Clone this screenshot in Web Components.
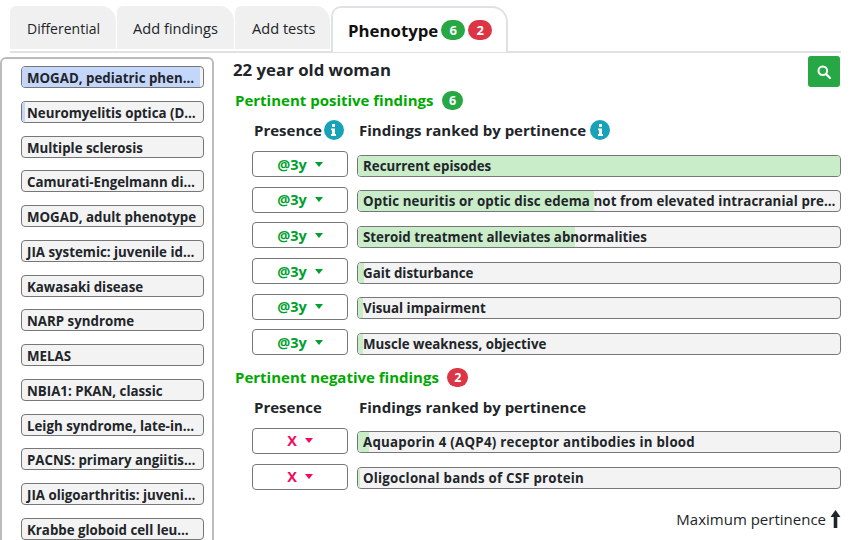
<!DOCTYPE html>
<html><head><meta charset="utf-8"><style>
html,body{margin:0;padding:0;background:#fff;width:850px;height:540px;overflow:hidden}
body{font-family:"Open Sans","Noto Sans",sans-serif;color:#212529}
</style></head><body>
<app-shell></app-shell>
<script>
function def(name, css, html){
  customElements.define(name, class extends HTMLElement{
    connectedCallback(){
      if(this.shadowRoot) return;
      const r=this.attachShadow({mode:'open'});
      const h = typeof html==='function'?html(this):html;
      r.innerHTML='<style>'+css+'</style>'+h;
    }
  });
}
const F='"Open Sans","Noto Sans",sans-serif';
def('count-badge',`:host{display:inline-flex;align-items:center;justify-content:center;width:21px;height:19px;border-radius:10px;color:#fff;font:700 12.500px ${F};background:#28a745}:host([c=red]){background:#dc3545}:host([big]){width:24px;height:20px;font-size:13px}`,'<slot></slot>');
def('info-dot',`:host{display:inline-flex;align-items:center;justify-content:center;width:20px;height:20px;border-radius:50%;background:#17a2b8;color:#fff}`,'<svg width="5" height="12" viewBox="0 0 5 12"><rect x="1" y="0" width="3" height="3" fill="#fff"/><path d="M0 4.500h4v5.500h1v2H0v-2h1V6.300H0z" fill="#fff"/></svg>');
def('tab-item',`:host{display:flex;align-items:center;box-sizing:border-box;height:43px;padding:1px 0 0 17px;background:#f0f0f0;border-radius:6px 15px 0 0;font:400 14.600px ${F};color:#212529;margin-bottom:2px;white-space:nowrap}
:host([active]){background:#fff;height:46px;margin-bottom:-1px;border:2px solid #dee2e6;border-bottom:0;border-radius:10px 16px 0 0;font-weight:700;font-size:16.800px;color:#111;gap:3px;padding:0 0 0 15px}`,'<slot></slot>');
def('tab-bar',`:host{display:flex;align-items:flex-end;gap:1px;box-sizing:border-box;margin:7px 0 0 10px;height:46px;border-bottom:2px solid #dee2e6;width:831px}`,'<slot></slot>');
def('dx-item',`:host{display:block;box-sizing:border-box;height:22px;width:183px;border:1px solid #777;border-radius:4px;background:#f3f3f3;position:relative;overflow:hidden;flex:none}
.f{position:absolute;left:0;top:0;bottom:0;background:#c4d7fb}
.t{position:relative;display:block;padding:1px 2px 0 5px;font:700 13.300px/20px ${F};white-space:nowrap;overflow:hidden;text-overflow:ellipsis;color:#212529}`,
 h=>`<div class="f" style="width:${h.getAttribute('p')||0}%"></div><span class="t" style="padding-right:${h.getAttribute('pr')||2}px"><slot></slot></span>`);
def('dx-list',`:host{display:flex;flex-direction:column;gap:12.750px;box-sizing:border-box;width:214px;height:490px;border:2px solid #bbb;border-bottom:0;border-radius:6px 6px 0 0;padding:7px 0 0 19px;overflow:hidden;flex:none}`,'<slot></slot>');
def('presence-select',`:host{display:flex;align-items:center;justify-content:center;gap:8px;box-sizing:border-box;width:96px;height:26px;border:1px solid #777;border-radius:4px;background:#fff;font:700 14.500px ${F};color:#00a030;flex:none}
:host([neg]){color:#f5085f}
i{display:block;width:0;height:0;border:4px solid transparent;border-top:5px solid currentColor;border-bottom:0}`,'<span><slot></slot></span><i></i>');
def('finding-bar',`:host{display:block;box-sizing:border-box;flex:1;min-width:0;height:22px;margin-top:3px;border:1px solid #777;border-radius:4px;background:#f3f3f3;position:relative;overflow:hidden}
.f{position:absolute;left:0;top:0;bottom:0;background:#c9ecc9}
.t{position:relative;display:block;padding:0 3px 0 5px;font:700 13.300px/20px ${F};white-space:nowrap;overflow:hidden;text-overflow:ellipsis;color:#212529}`,
 h=>`<div class="f" style="width:${h.getAttribute('p')||0}%"></div><span class="t" style="letter-spacing:${h.getAttribute('ls')||0}px"><slot></slot></span>`);
def('finding-row',`:host{display:flex;align-items:center;gap:9px;height:26px;margin-left:19px}`,'<slot></slot>');
def('col-heads',`:host{display:flex;align-items:center;height:24px;margin-left:21px;font:700 15px ${F};color:#212529;white-space:nowrap}
.a{display:flex;align-items:center;gap:2px;width:105px}.b{display:flex;align-items:center;gap:4px}`,
 h=>`<div class="a"><span>Presence</span>${h.hasAttribute('info')?'<info-dot></info-dot>':''}</div><div class="b"><span>Findings ranked by pertinence</span>${h.hasAttribute('info')?'<info-dot></info-dot>':''}</div>`);
def('section-title',`:host{display:flex;align-items:center;gap:8.500px;margin-left:2px;font:700 15px ${F};color:#00a800;height:20px;white-space:nowrap}`,'<slot></slot>');
def('search-btn',`:host{display:flex;align-items:center;justify-content:center;width:32px;height:31px;background:#28a745;border-radius:3px;flex:none;margin-right:1px}`,'<svg width="14" height="14" viewBox="0 0 14 14" fill="none" stroke="#fff"><circle cx="5.800" cy="5.800" r="4.300" stroke-width="2"/><path d="M9 9l4 4" stroke-width="2.200" stroke-linecap="round"/></svg>');
def('app-shell',`:host{display:block;width:850px;height:540px;overflow:hidden}
.body{display:flex;margin-top:4px}
.main{flex:none;width:608px;margin-left:19px}
.top{display:flex;justify-content:space-between;align-items:flex-start;height:31px;margin-top:-1px}
h1{margin:2px 0 0;font:700 16.800px ${F};color:#212529}
.rows{display:flex;flex-direction:column;gap:9.700px}
.foot{display:flex;justify-content:flex-end;align-items:center;gap:4px;margin-top:19px;font:400 15px ${F};color:#212529}
.foot svg{flex:none}`,`
<tab-bar>
 <tab-item style="width:106px;font-size:14px">Differential</tab-item><tab-item style="width:117px;padding-left:16px">Add findings</tab-item><tab-item style="width:95px;padding-left:17px">Add tests</tab-item>
 <tab-item active style="width:177px">Phenotype <count-badge big>6</count-badge><count-badge big c="red">2</count-badge></tab-item>
</tab-bar>
<div class="body">
<dx-list>
 <dx-item p="98.500">MOGAD, pediatric phenotype</dx-item>
 <dx-item p="1.600">Neuromyelitis optica (DEVIC)</dx-item>
 <dx-item>Multiple sclerosis</dx-item>
 <dx-item>Camurati-Engelmann disease</dx-item>
 <dx-item>MOGAD, adult phenotype</dx-item>
 <dx-item pr="8">JIA systemic: juvenile idiopathic</dx-item>
 <dx-item>Kawasaki disease</dx-item>
 <dx-item>NARP syndrome</dx-item>
 <dx-item>MELAS</dx-item>
 <dx-item>NBIA1: PKAN, classic</dx-item>
 <dx-item pr="8">Leigh syndrome, late-infantile</dx-item>
 <dx-item pr="6">PACNS: primary angiitis of CNS</dx-item>
 <dx-item pr="4">JIA oligoarthritis: juvenile idiopathic</dx-item>
 <dx-item pr="8">Krabbe globoid cell leukodystrophy</dx-item>
</dx-list>
<div class="main">
 <div class="top"><h1>22 year old woman</h1><search-btn></search-btn></div>
 <section-title style="margin-top:3px">Pertinent positive findings <count-badge>6</count-badge></section-title>
 <col-heads info style="margin-top:8px;margin-bottom:9px"></col-heads>
 <div class="rows">
  <finding-row><presence-select>@3y</presence-select><finding-bar p="100">Recurrent episodes</finding-bar></finding-row>
  <finding-row><presence-select>@3y</presence-select><finding-bar p="49" ls="0.100">Optic neuritis or optic disc edema not from elevated intracranial pressure</finding-bar></finding-row>
  <finding-row><presence-select>@3y</presence-select><finding-bar p="45">Steroid treatment alleviates abnormalities</finding-bar></finding-row>
  <finding-row><presence-select>@3y</presence-select><finding-bar p="1.200">Gait disturbance</finding-bar></finding-row>
  <finding-row><presence-select>@3y</presence-select><finding-bar p="1">Visual impairment</finding-bar></finding-row>
  <finding-row><presence-select>@3y</presence-select><finding-bar p="1">Muscle weakness, objective</finding-bar></finding-row>
 </div>
 <section-title style="margin-top:12px">Pertinent negative findings <count-badge c="red">2</count-badge></section-title>
 <col-heads style="margin-top:8px;margin-bottom:8.500px"></col-heads>
 <div class="rows">
  <finding-row><presence-select neg>X</presence-select><finding-bar p="2.300" ls="0.250">Aquaporin 4 (AQP4) receptor antibodies in blood</finding-bar></finding-row>
  <finding-row><presence-select neg>X</presence-select><finding-bar p="0.400" ls="0.220">Oligoclonal bands of CSF protein</finding-bar></finding-row>
 </div>
 <div class="foot">Maximum pertinence <svg width="11" height="18" viewBox="0 0 11 18"><path d="M5.500 0L10.500 7H7.300V18H3.700V7H.5z" fill="#212529"/></svg></div>
</div>
</div>`);
</script></body></html>
